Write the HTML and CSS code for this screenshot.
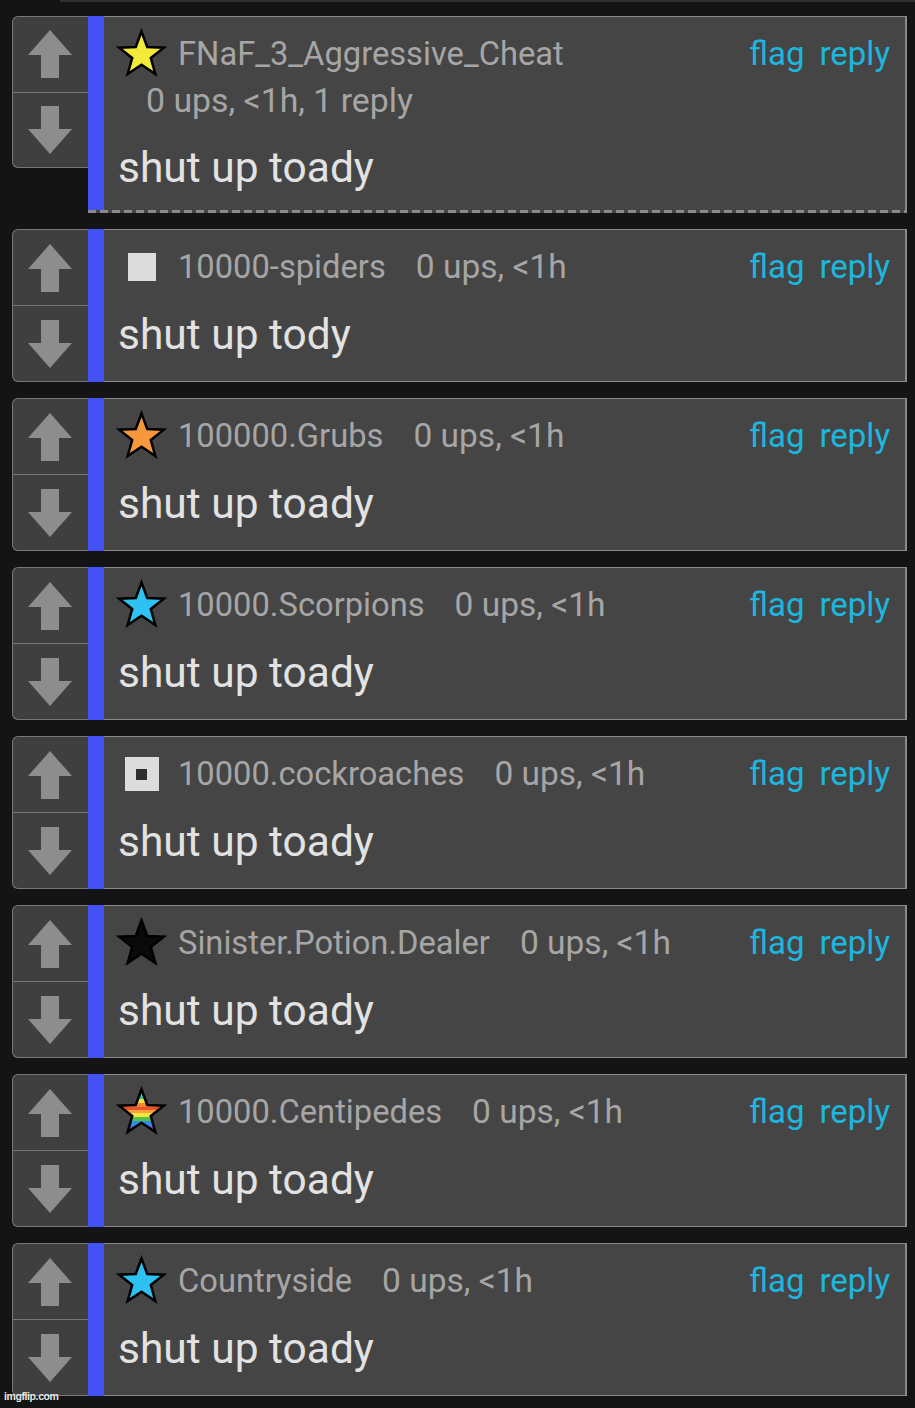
FILE: index.html
```html
<!DOCTYPE html>
<html>
<head>
<meta charset="utf-8">
<link rel="stylesheet" href="styles.css">
</head>
<body>
<svg width="0" height="0" class="defs">
  <defs>
    <polygon id="star" points="26,3 31.88,18.91 48.83,19.58 35.51,30.09 40.11,46.42 26,37 11.89,46.42 16.49,30.09 3.17,19.58 20.12,18.91"/>
    <polygon id="arrow" points="22,0 44,25 31,25 31,48 13,48 13,25 0,25"/>
    <linearGradient id="rainbow" x1="0" y1="0" x2="0" y2="1">
      <stop offset="0" stop-color="#38c0b0"/>
      <stop offset="0.22" stop-color="#38c0b0"/>
      <stop offset="0.22" stop-color="#f6e03a"/>
      <stop offset="0.33" stop-color="#f6e03a"/>
      <stop offset="0.33" stop-color="#f7862e"/>
      <stop offset="0.41" stop-color="#f7862e"/>
      <stop offset="0.41" stop-color="#ee5032"/>
      <stop offset="0.48" stop-color="#ee5032"/>
      <stop offset="0.48" stop-color="#f9a23a"/>
      <stop offset="0.56" stop-color="#f9a23a"/>
      <stop offset="0.56" stop-color="#f3e640"/>
      <stop offset="0.65" stop-color="#f3e640"/>
      <stop offset="0.65" stop-color="#52c247"/>
      <stop offset="0.75" stop-color="#52c247"/>
      <stop offset="0.75" stop-color="#2f8ef0"/>
      <stop offset="0.86" stop-color="#2f8ef0"/>
      <stop offset="0.86" stop-color="#7a4fd0"/>
      <stop offset="1" stop-color="#7a4fd0"/>
    </linearGradient>
  </defs>
</svg>

<div class="topline"></div>

<main class="thread">

  <section class="comment first">
    <div class="votes">
      <div class="vote"><svg class="arr" viewBox="0 0 44 48"><use href="#arrow"/></svg></div>
      <div class="vote down"><svg class="arr" viewBox="0 0 44 48"><use href="#arrow"/></svg></div>
    </div>
    <div class="body">
      <div class="bar"></div>
      <div class="content">
        <div class="head">
          <span class="icon"><svg class="star" viewBox="0 0 52 52"><use href="#star" class="s-yellow"/></svg></span>
          <span class="name">FNaF_3_Aggressive_Cheat</span>
          <span class="actions"><span>flag</span><span>reply</span></span>
        </div>
        <div class="meta">0 ups, &lt;1h, 1 reply</div>
        <div class="text first-text">shut up toady</div>
      </div>
    </div>
  </section>

  <section class="comment">
    <div class="votes">
      <div class="vote"><svg class="arr" viewBox="0 0 44 48"><use href="#arrow"/></svg></div>
      <div class="vote down"><svg class="arr" viewBox="0 0 44 48"><use href="#arrow"/></svg></div>
    </div>
    <div class="body">
      <div class="bar"></div>
      <div class="content">
        <div class="head">
          <span class="icon"><span class="sq"></span></span>
          <span class="name">10000-spiders</span>
          <span class="ups">0 ups, &lt;1h</span>
          <span class="actions"><span>flag</span><span>reply</span></span>
        </div>
        <div class="text">shut up tody</div>
      </div>
    </div>
  </section>

  <section class="comment">
    <div class="votes">
      <div class="vote"><svg class="arr" viewBox="0 0 44 48"><use href="#arrow"/></svg></div>
      <div class="vote down"><svg class="arr" viewBox="0 0 44 48"><use href="#arrow"/></svg></div>
    </div>
    <div class="body">
      <div class="bar"></div>
      <div class="content">
        <div class="head">
          <span class="icon"><svg class="star" viewBox="0 0 52 52"><use href="#star" class="s-orange"/></svg></span>
          <span class="name">100000.Grubs</span>
          <span class="ups">0 ups, &lt;1h</span>
          <span class="actions"><span>flag</span><span>reply</span></span>
        </div>
        <div class="text">shut up toady</div>
      </div>
    </div>
  </section>

  <section class="comment">
    <div class="votes">
      <div class="vote"><svg class="arr" viewBox="0 0 44 48"><use href="#arrow"/></svg></div>
      <div class="vote down"><svg class="arr" viewBox="0 0 44 48"><use href="#arrow"/></svg></div>
    </div>
    <div class="body">
      <div class="bar"></div>
      <div class="content">
        <div class="head">
          <span class="icon"><svg class="star" viewBox="0 0 52 52"><use href="#star" class="s-blue"/></svg></span>
          <span class="name">10000.Scorpions</span>
          <span class="ups">0 ups, &lt;1h</span>
          <span class="actions"><span>flag</span><span>reply</span></span>
        </div>
        <div class="text">shut up toady</div>
      </div>
    </div>
  </section>

  <section class="comment">
    <div class="votes">
      <div class="vote"><svg class="arr" viewBox="0 0 44 48"><use href="#arrow"/></svg></div>
      <div class="vote down"><svg class="arr" viewBox="0 0 44 48"><use href="#arrow"/></svg></div>
    </div>
    <div class="body">
      <div class="bar"></div>
      <div class="content">
        <div class="head">
          <span class="icon"><span class="sq big"><span class="dot"></span></span></span>
          <span class="name">10000.cockroaches</span>
          <span class="ups">0 ups, &lt;1h</span>
          <span class="actions"><span>flag</span><span>reply</span></span>
        </div>
        <div class="text">shut up toady</div>
      </div>
    </div>
  </section>

  <section class="comment">
    <div class="votes">
      <div class="vote"><svg class="arr" viewBox="0 0 44 48"><use href="#arrow"/></svg></div>
      <div class="vote down"><svg class="arr" viewBox="0 0 44 48"><use href="#arrow"/></svg></div>
    </div>
    <div class="body">
      <div class="bar"></div>
      <div class="content">
        <div class="head">
          <span class="icon"><svg class="star" viewBox="0 0 52 52"><use href="#star" class="s-black"/></svg></span>
          <span class="name">Sinister.Potion.Dealer</span>
          <span class="ups">0 ups, &lt;1h</span>
          <span class="actions"><span>flag</span><span>reply</span></span>
        </div>
        <div class="text">shut up toady</div>
      </div>
    </div>
  </section>

  <section class="comment">
    <div class="votes">
      <div class="vote"><svg class="arr" viewBox="0 0 44 48"><use href="#arrow"/></svg></div>
      <div class="vote down"><svg class="arr" viewBox="0 0 44 48"><use href="#arrow"/></svg></div>
    </div>
    <div class="body">
      <div class="bar"></div>
      <div class="content">
        <div class="head">
          <span class="icon"><svg class="star" viewBox="0 0 52 52"><use href="#star" class="s-rainbow"/></svg></span>
          <span class="name">10000.Centipedes</span>
          <span class="ups">0 ups, &lt;1h</span>
          <span class="actions"><span>flag</span><span>reply</span></span>
        </div>
        <div class="text">shut up toady</div>
      </div>
    </div>
  </section>

  <section class="comment">
    <div class="votes">
      <div class="vote"><svg class="arr" viewBox="0 0 44 48"><use href="#arrow"/></svg></div>
      <div class="vote down"><svg class="arr" viewBox="0 0 44 48"><use href="#arrow"/></svg></div>
    </div>
    <div class="body">
      <div class="bar"></div>
      <div class="content">
        <div class="head">
          <span class="icon"><svg class="star" viewBox="0 0 52 52"><use href="#star" class="s-blue"/></svg></span>
          <span class="name">Countryside</span>
          <span class="ups">0 ups, &lt;1h</span>
          <span class="actions"><span>flag</span><span>reply</span></span>
        </div>
        <div class="text">shut up toady</div>
      </div>
    </div>
  </section>

</main>

<div class="watermark">imgflip.com</div>
</body>
</html>
```

FILE: styles.css
```css
* { box-sizing: border-box; }

html, body {
  margin: 0;
  padding: 0;
  background: #141414;
}

body {
  position: relative;
  width: 915px;
  min-height: 1408px;
  font-family: Roboto, "Liberation Sans", sans-serif;
}

.defs {
  position: absolute;
  width: 0;
  height: 0;
}

.topline {
  height: 2px;
  margin-left: 60px;
  background: #2e2e2e;
}

.thread {
  display: flex;
  flex-direction: column;
  gap: 16px;
  padding: 14px 8px 0 12px;
}

.comment {
  display: flex;
  align-items: stretch;
  height: 153px;
}

.comment.first {
  height: 197px;
  align-items: flex-start;
}

.votes {
  width: 76px;
  flex: none;
  display: flex;
  flex-direction: column;
  background: #3f3f3f;
  border: 1px solid #777;
  border-right: none;
  border-radius: 6px 0 0 6px;
}

.comment.first .votes {
  height: 152px;
}

.vote {
  flex: 1;
  display: flex;
  align-items: center;
  justify-content: center;
}

.vote.down {
  border-top: 1px solid #767676;
}

.vote.down .arr {
  transform: rotate(180deg);
}

.arr {
  width: 44px;
  height: 48px;
  fill: #8d8d8d;
  margin-right: 1px;
}

.body {
  flex: 1;
  display: flex;
  height: 100%;
  background: #454545;
}

.comment.first .body {
  padding-bottom: 3px;
  background-color: #454545;
  background-image: repeating-linear-gradient(to right, #8a8a8a 0 8px, #454545 8px 12px);
  background-size: 100% 3px;
  background-repeat: no-repeat;
  background-position: left bottom;
}

.bar {
  width: 16px;
  flex: none;
  background: #4451f4;
}

.content {
  flex: 1;
  padding: 11px 15px 0 12px;
  border-top: 1px solid #8a8a8a;
  border-right: 2px solid #8a8a8a;
  border-bottom: 1px solid #8a8a8a;
  background: #454545;
}

.comment.first .content {
  border-bottom: none;
}

.head {
  display: flex;
  align-items: center;
  height: 52px;
  line-height: 52px;
  font-size: 32.7px;
  white-space: nowrap;
}

.icon {
  width: 51px;
  height: 52px;
  flex: none;
  margin-right: 11px;
  display: flex;
  align-items: center;
  justify-content: center;
}

.star {
  width: 52px;
  height: 52px;
  display: block;
}

.star use {
  stroke: #000;
  stroke-width: 2.6;
  stroke-linejoin: miter;
}

.s-yellow { fill: #f3ea3c; }
.s-orange { fill: #f7983c; }
.s-blue { fill: #2ec2f2; }
.s-black { fill: #0a0a0a; }
.s-rainbow { fill: url(#rainbow); }

.sq {
  width: 28px;
  height: 28px;
  background: #dcdcdc;
  display: flex;
  align-items: center;
  justify-content: center;
}

.sq.big {
  width: 34px;
  height: 34px;
}

.dot {
  width: 11px;
  height: 11px;
  background: #2e2e2e;
}

.name {
  color: #a6a6a6;
}

.ups {
  color: #a6a6a6;
  margin-left: 30px;
  font-size: 33.5px;
}

.actions {
  margin-left: auto;
  display: flex;
  gap: 15px;
  color: #1db6de;
  font-size: 33px;
}

.meta {
  margin: 1px 0 0 30px;
  height: 40px;
  line-height: 40px;
  font-size: 33.8px;
  color: #a6a6a6;
}

.text {
  margin: 17px 0 0 2px;
  font-size: 42.5px;
  line-height: 50px;
  color: #e2e2e2;
  white-space: nowrap;
}

.text.first-text {
  margin-top: 22px;
}

.watermark {
  position: absolute;
  left: 4px;
  bottom: 6px;
  font-family: "Liberation Sans", Arial, sans-serif;
  font-size: 10.5px;
  font-weight: bold;
  color: #e8e8e8;
  letter-spacing: -0.4px;
}
```
